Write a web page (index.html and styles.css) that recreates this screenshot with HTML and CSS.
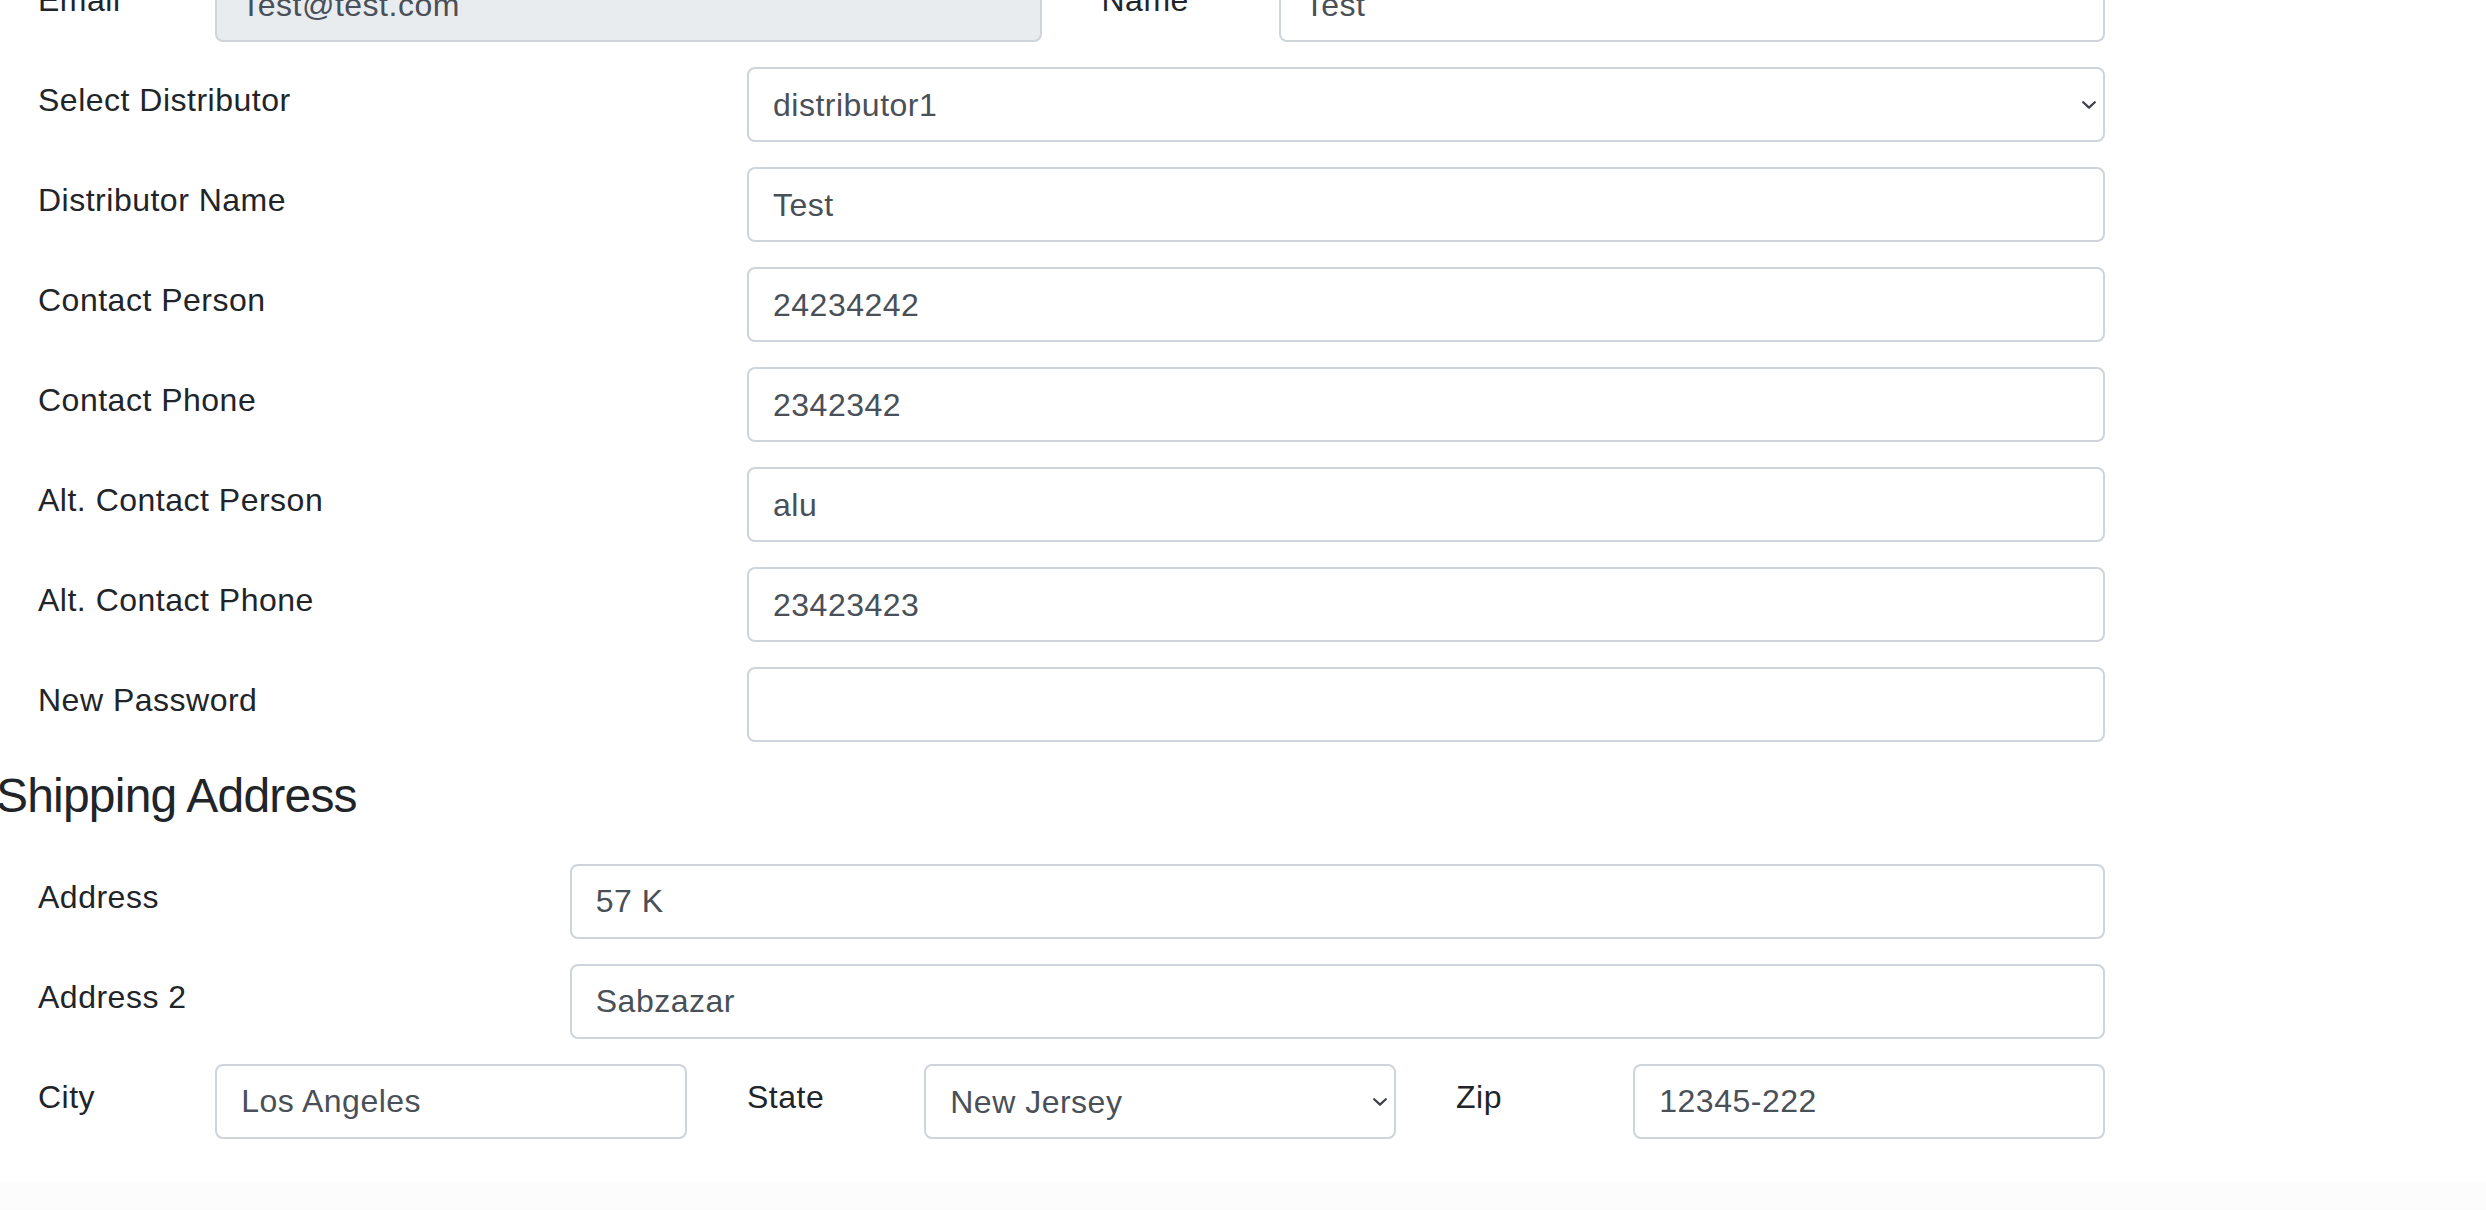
FILE: index.html
```html
<!DOCTYPE html>
<html lang="en">
<head>
<meta charset="utf-8">
<title>Profile</title>
<link rel="stylesheet" href="styles.css">
</head>
<body>
<main class="page">
  <form class="profile-form">
    <div class="form-row">
      <label class="field-label span1">Email</label>
      <div class="span5"><input class="form-control readonly" type="text" value="Test@test.com" readonly></div>
      <label class="field-label span1">Name</label>
      <div class="span5"><input class="form-control" type="text" value="Test"></div>
    </div>
    <div class="form-row">
      <label class="field-label span4">Select Distributor</label>
      <div class="span8 select-wrap">
        <select class="form-control"><option>distributor1</option></select>
        <svg class="chevron" width="14" height="8" viewBox="0 0 14 8"><polyline points="1.2,1.2 7,6.6 12.8,1.2" fill="none" stroke="#3d4147" stroke-width="2.2" stroke-linecap="round" stroke-linejoin="round"/></svg>
      </div>
    </div>
    <div class="form-row">
      <label class="field-label span4">Distributor Name</label>
      <div class="span8"><input class="form-control" type="text" value="Test"></div>
    </div>
    <div class="form-row">
      <label class="field-label span4">Contact Person</label>
      <div class="span8"><input class="form-control" type="text" value="24234242"></div>
    </div>
    <div class="form-row">
      <label class="field-label span4">Contact Phone</label>
      <div class="span8"><input class="form-control" type="text" value="2342342"></div>
    </div>
    <div class="form-row">
      <label class="field-label span4">Alt. Contact Person</label>
      <div class="span8"><input class="form-control" type="text" value="alu"></div>
    </div>
    <div class="form-row">
      <label class="field-label span4">Alt. Contact Phone</label>
      <div class="span8"><input class="form-control" type="text" value="23423423"></div>
    </div>
    <div class="form-row">
      <label class="field-label span4">New Password</label>
      <div class="span8"><input class="form-control" type="password" value=""></div>
    </div>

    <h4 class="section-title">Shipping Address</h4>

    <div class="form-row">
      <label class="field-label span3">Address</label>
      <div class="span9"><input class="form-control" type="text" value="57 K"></div>
    </div>
    <div class="form-row">
      <label class="field-label span3">Address 2</label>
      <div class="span9"><input class="form-control" type="text" value="Sabzazar"></div>
    </div>
    <div class="form-row">
      <label class="field-label span1">City</label>
      <div class="span3"><input class="form-control" type="text" value="Los Angeles"></div>
      <label class="field-label span1">State</label>
      <div class="span3 select-wrap">
        <select class="form-control"><option>New Jersey</option></select>
        <svg class="chevron" width="14" height="8" viewBox="0 0 14 8"><polyline points="1.2,1.2 7,6.6 12.8,1.2" fill="none" stroke="#3d4147" stroke-width="2.2" stroke-linecap="round" stroke-linejoin="round"/></svg>
      </div>
      <label class="field-label span1">Zip</label>
      <div class="span3"><input class="form-control" type="text" value="12345-222"></div>
    </div>
  </form>
  <footer class="page-footer"></footer>
</main>
</body>
</html>
```

FILE: styles.css
```css
html, body {
  margin: 0;
  padding: 0;
  background: #ffffff;
  overflow: hidden;
}

body {
  font-family: "Liberation Sans", Arial, sans-serif;
  color: #212529;
}

.page {
  width: 2486px;
}

.profile-form {
  width: 2127px;
  margin: -32.7px 0 0 8px;
  padding-bottom: 18px;
}

.form-row {
  display: grid;
  grid-template-columns: repeat(12, minmax(0, 1fr));
  column-gap: 60px;
  padding: 0 30px;
  height: 75px;
  margin-bottom: 25px;
}

.span1 { grid-column: span 1; }
.span3 { grid-column: span 3; }
.span4 { grid-column: span 4; }
.span5 { grid-column: span 5; }
.span8 { grid-column: span 8; }
.span9 { grid-column: span 9; }

.field-label {
  font-size: 32px;
  line-height: 48px;
  letter-spacing: 0.5px;
  padding-top: 9px;
  color: #212529;
  white-space: nowrap;
}

.form-control {
  display: block;
  width: 100%;
  height: 75px;
  box-sizing: border-box;
  margin: 0;
  padding: 12px 24px 11px 24px;
  border: 2px solid #ced4da;
  border-radius: 8px;
  background: #ffffff;
  font-family: "Liberation Sans", Arial, sans-serif;
  font-size: 32px;
  line-height: 48px;
  letter-spacing: 0.5px;
  color: #495057;
  outline: none;
}

.form-control.readonly {
  background: #e9ecef;
}

select.form-control {
  -webkit-appearance: none;
  appearance: none;
  padding-right: 48px;
}

.select-wrap {
  position: relative;
}

.chevron {
  position: absolute;
  right: 9px;
  top: 34px;
  pointer-events: none;
}

.section-title {
  margin: 0 0 38.8px -12px;
  font-size: 48px;
  line-height: 57.6px;
  font-weight: 400;
  letter-spacing: -0.8px;
  color: #212529;
}

.page-footer {
  height: 60px;
  background: linear-gradient(#fdfdfd, #f9f9f9);
}
```
